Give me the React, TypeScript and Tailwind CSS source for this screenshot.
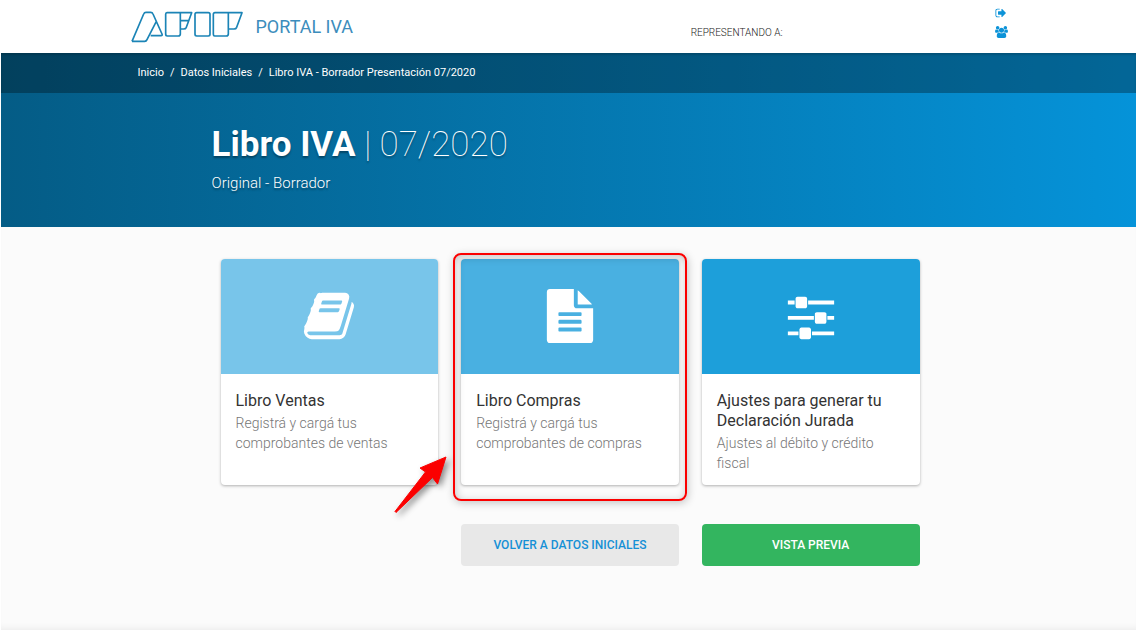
import React from "react";

const bookPath =
  "M1703 478q40 57 18 129l-275 906q-19 64-76.5 107.5t-122.5 43.5h-923q-77 0-148.5-53.5t-99.5-131.5q-24-67-2-127 0-4 3-27t4-37q1-8-3-21.5t-3-19.5q2-11 8-21t16.5-23.5 16.5-23.5q23-38 45-91.5t30-91.5q3-10 .5-30t-.5-28q3-11 17-28t17-23q21-36 42-92t25-90q1-9-2.5-32t.5-28q4-13 22-30.5t22-22.5q19-26 42.5-84.5t27.5-96.5q1-8-3-25.5t-2-26.5q2-8 9-18t18-23 17-21q8-12 16.5-30.5t15-35 16-36 19.5-32 26.5-23.5 36-11.5 47.5 5.5l-1 3q38-9 51-9h761q74 0 114 56t18 130l-274 906q-36 119-71.5 153.5t-128.5 34.5h-869q-27 0-38 15-11 16-1 43 24 70 144 70h923q29 0 56-15.5t35-41.5l300-987q7-22 5-57 38 15 59 43zm-1064 2q-4 13 2 22.5t20 9.5h608q13 0 25.5-9.5t16.5-22.5l21-64q4-13-2-22.5t-20-9.5h-608q-13 0-25.5 9.5t-16.5 22.5zm-83 256q-4 13 2 22.5t20 9.5h608q13 0 25.5-9.5t16.5-22.5l21-64q4-13-2-22.5t-20-9.5h-608q-13 0-25.5 9.5t-16.5 22.5z";
const filePath =
  "M1596 476q14 14 28 36h-472v-472q22 14 36 28zm-476 164h544v1056q0 40-28 68t-68 28h-1344q-40 0-68-28t-28-68v-1600q0-40 28-68t68-28h800v544q0 40 28 68t68 28zm160 736v-64q0-14-9-23t-23-9h-704q-14 0-23 9t-9 23v64q0 14 9 23t23 9h704q14 0 23-9t9-23zm0-256v-64q0-14-9-23t-23-9h-704q-14 0-23 9t-9 23v64q0 14 9 23t23 9h704q14 0 23-9t9-23zm0-256v-64q0-14-9-23t-23-9h-704q-14 0-23 9t-9 23v64q0 14 9 23t23 9h704q14 0 23-9t9-23z";
const slidersPath =
  "M480 1408v128h-352v-128h352zm352-128q26 0 45 19t19 45v256q0 26-19 45t-45 19h-256q-26 0-45-19t-19-45v-256q0-26 19-45t45-19h256zm160-384v128h-864v-128h864zm-640-512v128h-224v-128h224zm1312 1024v128h-736v-128h736zm-960-1152q26 0 45 19t19 45v256q0 26-19 45t-45 19h-256q-26 0-45-19t-19-45v-256q0-26 19-45t45-19h256zm640 512q26 0 45 19t19 45v256q0 26-19 45t-45 19h-256q-26 0-45-19t-19-45v-256q0-26 19-45t45-19h256zm320 128v128h-224v-128h224zm0-512v128h-864v-128h864z";
const signOutPath =
  "M704 1440q0 4 1 20t.5 26.5-3 23.5-10 19.5-20.5 6.5h-320q-119 0-203.5-84.5t-84.5-203.5v-704q0-119 84.5-203.5t203.5-84.5h320q13 0 22.5 9.5t9.5 22.5q0 4 1 20t.5 26.5-3 23.5-10 19.5-20.5 6.5h-320q-66 0-113 47t-47 113v704q0 66 47 113t113 47h312l11.5 1 11.5 3 8 5.5 7 9 2 13.5zm928-544q0 26-19 45l-544 544q-19 19-45 19t-45-19-19-45v-288h-448q-26 0-45-19t-19-45v-384q0-26 19-45t45-19h448v-288q0-26 19-45t45-19 45 19l544 544q19 19 19 45z";
const usersPath =
  "M593 896q-162 5-265 128h-134q-82 0-138-40.5t-56-118.5q0-353 124-353 6 0 43.5 21t97.5 42.5 119 21.5q67 0 133-23-5 37-5 66 0 139 81 256zm1071 637q0 120-73 189.5t-194 69.5h-874q-121 0-194-69.5t-73-189.5q0-53 3.5-103.5t14-109 26.5-108.5 43-97.5 62-81 85.5-53.5 111.5-20q10 0 43 21.5t73 48 107 48 135 21.5 135-21.5 107-48 73-48 43-21.5q61 0 111.5 20t85.5 53.5 62 81 43 97.5 26.5 108.5 14 109 3.5 103.5zm-1024-1277q0 106-75 181t-181 75-181-75-75-181 75-181 181-75 181 75 75 181zm704 384q0 159-112.5 271.5t-271.5 112.5-271.5-112.5-112.5-271.5 112.5-271.5 271.5-112.5 271.5 112.5 112.5 271.5zm576 225q0 78-56 118.5t-138 40.5h-134q-103-123-265-128 81-117 81-256 0-29-5-66 66 23 133 23 59 0 119-21.5t97.5-42.5 43.5-21q124 0 124 353zm-128-609q0 106-75 181t-181 75-181-75-75-181 75-181 181-75 181 75 75 181z";

function Logo() {
  return (
    <svg viewBox="30 28 342 102" className="h-[34px] w-[114px]" fill="none" stroke="#1b84b6" strokeWidth="5" strokeLinejoin="round" role="img" aria-label="AFIP">
      <path d="M36 122 71 40q2-5 7-5h14q5 0 7 5l27 60q2 5-3 5H92M36 122h38q5 0 7-5l28-55" />
      <path d="M141 36h40v64q0 6-6 6h-33q-5 0-5-5V41q0-5 4-5zM181 36h34L199 80q-2 5-8 5h-10M181 60h25" />
      <rect x="225" y="36" width="45" height="70" rx="5" />
      <path d="M285 36h40v64q0 6-6 6h-35q-4 0-4-5V41q0-5 5-5zM325 36h41L350 80q-2 5-8 5h-17" />
    </svg>
  );
}

interface Card {
  title: string;
  text: string;
  icon: string;
  tone: string;
  highlighted?: boolean;
}

const cards: Card[] = [
  { title: "Libro Ventas", text: "Registrá y cargá tus comprobantes de ventas", icon: bookPath, tone: "bg-[#78c5ea]" },
  { title: "Libro Compras", text: "Registrá y cargá tus comprobantes de compras", icon: filePath, tone: "bg-[#49b0e1]", highlighted: true },
  { title: "Ajustes para generar tu Declaración Jurada", text: "Ajustes al débito y crédito fiscal", icon: slidersPath, tone: "bg-[#1d9fda]" },
];

function Highlight() {
  return (
    <>
      <span className="pointer-events-none absolute -inset-x-2 -top-[6px] -bottom-4 rounded-lg border-2 border-[#fb0000] shadow-[1px_2px_8px_rgba(0,0,0,0.22),inset_1px_2px_8px_rgba(0,0,0,0.22)]" />
      <svg viewBox="0 0 60 64" className="pointer-events-none absolute -left-[70px] top-[194px] h-16 w-[60px] overflow-visible drop-shadow-[3px_3px_3px_rgba(0,0,0,0.45)]" aria-hidden="true">
        <path d="M55 4 46.500 31 41.500 24.500 5 59.500 4 58.500 34.500 19 29 15z" fill="#fb0000" stroke="#fb0000" strokeLinejoin="round" />
      </svg>
    </>
  );
}

export default function App() {
  return (
    <div className="min-h-screen border-l border-white bg-[#fbfbfb] font-['Roboto',sans-serif] shadow-[inset_0_-6px_6px_-4px_rgba(0,0,0,0.06)]">
      <header className="flex h-[53px] justify-center bg-white">
        <div className="flex w-full max-w-[878px] justify-between">
          <a href="#inicio" className="flex items-center gap-3">
            <Logo />
            <span className="text-lg text-[#3c8dbc]">PORTAL IVA</span>
          </a>
          <div className="flex gap-[212px]">
            <span className="pt-6 text-[10px] leading-[18px] font-light text-[#222]">REPRESENTANDO A:</span>
            <nav className="flex flex-col items-center gap-[7px] pt-[7px] text-[#0c93d8]">
              <a href="#salir" aria-label="Salir">
                <svg viewBox="0 0 1792 1792" className="block size-3" fill="currentColor"><path d={signOutPath} /></svg>
              </a>
              <a href="#usuarios" aria-label="Cambiar de usuario">
                <svg viewBox="0 0 1920 1792" className="block h-3 w-[13px]" fill="currentColor"><path d={usersPath} /></svg>
              </a>
            </nav>
          </div>
        </div>
      </header>

      <div className="bg-linear-to-r from-[#045c86] to-[#0593d9] text-white">
        <nav aria-label="Ruta" className="flex h-10 items-center justify-center bg-black/30 shadow-[inset_0_2px_2px_rgba(0,0,0,0.15)]">
          <ol className="flex w-full max-w-[862px] gap-[6px] pt-px text-[11px]">
            <li><a href="#inicio">Inicio</a></li>
            <li aria-hidden="true">/</li>
            <li><a href="#datos">Datos Iniciales</a></li>
            <li aria-hidden="true">/</li>
            <li aria-current="page">Libro IVA - Borrador Presentación 07/2020</li>
          </ol>
        </nav>
        <div className="mx-auto h-[134px] w-full max-w-[714px] pt-7 [text-shadow:0_2px_2px_rgba(0,0,0,0.35)]">
          <h1 className="text-[35px] leading-[48px] font-bold">
            Libro IVA <span className="font-thin">| 07/2020</span>
          </h1>
          <p className="mt-[2px] text-[15px] leading-6 font-light">Original - Borrador</p>
        </div>
      </div>

      <main className="pl-[3px]">
        <div className="mx-auto grid w-full max-w-[699px] grid-cols-3 gap-x-[23px] gap-y-[39px] py-8">
          {cards.map((card) => (
            <div key={card.title} className="relative">
              <a href="#libro" className="flex h-full min-h-[226px] flex-col overflow-hidden rounded-sm bg-white shadow-[0_1px_3px_rgba(0,0,0,0.3)]">
                <span className={`flex h-[115px] items-center justify-center pb-px ${card.tone}`}>
                  <svg viewBox="0 0 1792 1792" className="size-[54px]" fill="white" aria-hidden="true"><path d={card.icon} /></svg>
                </span>
                <span className="flex flex-col gap-[2px] px-[15px] pt-[17px]">
                  <span className="text-base leading-5 text-[#333]">{card.title}</span>
                  <span className="text-sm leading-5 font-light text-[#777]">{card.text}</span>
                </span>
              </a>
              {card.highlighted && <Highlight />}
            </div>
          ))}
          <button className="col-start-2 h-[42px] rounded-sm bg-[#e8e8e8] text-xs font-medium text-[#1590d6]">VOLVER A DATOS INICIALES</button>
          <button className="h-[42px] rounded-sm bg-[#33b55f] text-xs font-medium text-white">VISTA PREVIA</button>
        </div>
      </main>
    </div>
  );
}
